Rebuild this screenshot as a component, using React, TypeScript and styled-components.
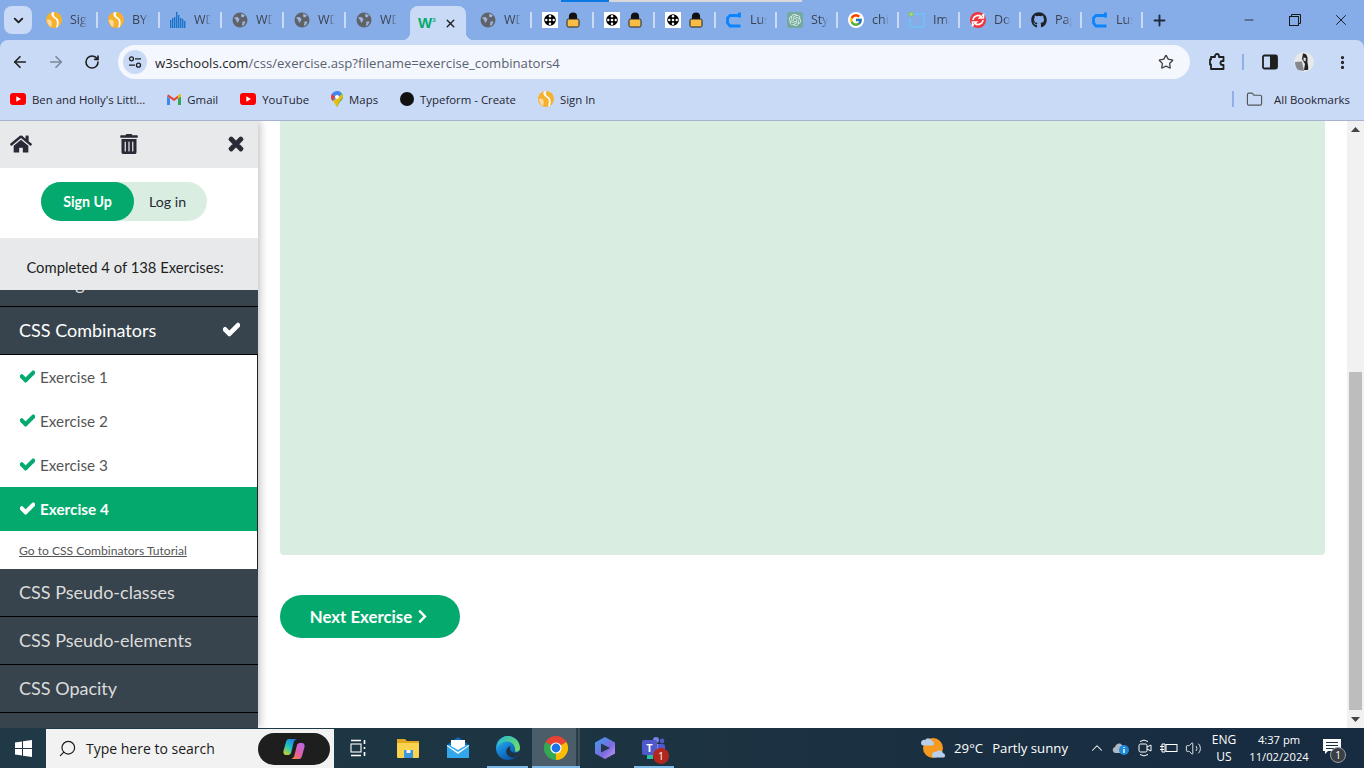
import React from "react";
import styled, { createGlobalStyle } from "styled-components";
import { ArrowLeft, ArrowRight, RotateCw, Star, MoreVertical, Folder, Plus, Minus, X, ChevronDown, ChevronUp, Search, Volume2 } from "lucide-react";
import { FaHome, FaTrashAlt, FaTimes, FaCheck, FaGithub, FaChevronRight } from "react-icons/fa";
import { FcGoogle } from "react-icons/fc";
import { SiOpenai } from "react-icons/si";

const Global = createGlobalStyle`
  html, body { margin: 0; padding: 0; overflow: hidden; background: #fff; }
  * { box-sizing: border-box; }
`;

const uiFont = `"Open Sans", "Noto Sans", sans-serif`;
const pageFont = `Lato, "Open Sans", sans-serif`;

const Screen = styled.div`
  width: 1364px; height: 768px; display: flex; flex-direction: column; overflow: hidden;
  position: relative; font-family: ${uiFont}; background: #87ade9;
`;
const LoadStrip = styled.div`
  position: absolute; top: 0; left: 561px; width: 241px; height: 2px; background: #d8d8d8;
  &::before { content: ""; display: block; width: 48px; height: 2px; background: #0b79e3; }
`;
const TabStrip = styled.div`
  height: 40px; flex: none; display: flex; align-items: center; padding-left: 4px; background: #87ade9;
`;
const TabMenu = styled.div`
  width: 28px; height: 28px; margin-right: 3px; border-radius: 8px; background: #c9daf6;
  display: flex; align-items: center; justify-content: center; color: #1f1f1f;
`;
const Tab = styled.div<{ $w?: number; $pad?: number; $noSep?: boolean }>`
  position: relative; height: 40px; flex: none; width: ${p => p.$w ?? 62}px;
  display: flex; align-items: center; gap: 8px; padding-left: ${p => p.$pad ?? 11}px; color: #3b4250;
  &::after {
    content: ""; display: ${p => (p.$noSep ? "none" : "block")}; position: absolute; right: -1px; top: 12px;
    width: 2px; height: 16px; background: #c9daf6;
  }
`;
const ActiveTab = styled.div`
  position: relative; height: 34px; margin-top: 6px; width: 56px; flex: none; background: #c9daf6;
  border-radius: 8px 8px 0 0; display: flex; align-items: center; padding: 0 9px 0 8px; justify-content: space-between;
  color: #1f1f1f;
  &::before, &::after { content: ""; position: absolute; bottom: 0; width: 8px; height: 8px; }
  &::before { left: -8px; background: radial-gradient(circle at 0 0, transparent 8px, #c9daf6 8.5px); }
  &::after { right: -8px; background: radial-gradient(circle at 100% 0, transparent 8px, #c9daf6 8.5px); }
`;
const TabTitle = styled.span`
  width: 17px; overflow: hidden; white-space: nowrap; font-size: 12.5px; line-height: 16px;
  -webkit-mask-image: linear-gradient(90deg, #000 60%, transparent);
  mask-image: linear-gradient(90deg, #000 60%, transparent);
`;
const W3Mark = styled.span`
  width: 17px; font-family: "Liberation Sans", sans-serif; font-weight: 700; font-size: 15px; line-height: 16px;
  color: #04aa6d; white-space: nowrap; letter-spacing: -1px;
  sup { font-size: 6px; color: #04aa6d; vertical-align: 6px; line-height: 0; margin-left: 1px; }
`;
const NewTab = styled.div`
  width: 34px; margin-left: 0; display: flex; justify-content: center; color: #1f2a3a;
`;
const WindowControls = styled.div`
  margin-left: auto; display: flex; height: 40px; color: #1a1a1a;
`;
const WinBtn = styled.div`
  width: 46px; display: flex; align-items: center; justify-content: center;
`;

const Toolbar = styled.div`
  height: 44px; flex: none; background: #c9daf6; border-radius: 8px 8px 0 0; display: flex; align-items: center;
  padding: 0 0 0 2px; color: #1f1f1f;
`;
const ToolBtn = styled.div<{ $w?: number; $dim?: boolean }>`
  width: ${p => p.$w ?? 36}px; flex: none; display: flex; justify-content: center; align-items: center;
  color: ${p => (p.$dim ? "#7c8798" : "#1f1f1f")};
`;
const Omnibox = styled.div`
  width: 1072px; margin-left: 8px; height: 34px; border-radius: 17px; background: #f4f7fd; flex: none;
  display: flex; align-items: center; padding: 0 16px 0 5px;
`;
const SiteChip = styled.div`
  width: 24px; height: 24px; border-radius: 50%; background: #c9daf6; display: flex; align-items: center; justify-content: center; flex: none;
`;
const Url = styled.div`
  margin-left: 8px; padding-top: 1px; font-size: 13.15px; color: #5a6270; white-space: nowrap; flex: 1;
  b { font-weight: 400; color: #1f1f1f; }
`;
const ToolRight = styled.div`
  display: flex; align-items: center; margin-left: 10px; flex: 1;
`;
const Divider = styled.div`
  width: 2px; height: 16px; background: #8fb1e8; flex: none;
`;
const Bookmarks = styled.div`
  height: 37px; flex: none; background: #c9daf6; border-bottom: 1px solid #a6b3cd; display: flex; align-items: center;
  padding: 0 14px 6px 10px; gap: 22px;
`;
const Bookmark = styled.div`
  display: flex; align-items: center; gap: 6px; font-size: 11.4px; color: #1f2633; white-space: nowrap;
`;
const BookmarkEnd = styled.div`
  margin-left: auto; display: flex; align-items: center; gap: 8px; font-size: 11.4px; color: #1f2633;
`;

const PageArea = styled.div`
  flex: 1; min-height: 0; display: flex; background: #fff; overflow: hidden;
`;
const Sidebar = styled.aside`
  width: 258px; flex: none; display: flex; flex-direction: column; position: relative; z-index: 2;
  box-shadow: 2px 0 8px rgba(0, 0, 0, 0.25); background: #fff; font-family: ${pageFont}; overflow: hidden;
`;
const SideIcons = styled.div`
  height: 47px; flex: none; background: #e7e9eb; display: flex; align-items: center; justify-content: space-between;
  padding: 0 12px 2px 10px; color: #282a35;
`;
const AuthBox = styled.div`
  height: 70px; flex: none; background: #fff; display: flex; align-items: center; padding: 0 0 4px 41px;
`;
const AuthPill = styled.div`
  width: 166px; height: 39px; border-radius: 20px; background: #d9eee1; display: flex; align-items: center;
  font-size: 14.2px; color: #282a35;
`;
const SignUp = styled.div`
  width: 93px; height: 39px; border-radius: 20px; background: #04aa6d; color: #fff; font-weight: 700;
  display: flex; align-items: center; justify-content: center;
`;
const LogIn = styled.div`
  flex: 1; text-align: center; padding-right: 6px;
`;
const Completed = styled.div`
  height: 52px; flex: none; background: #e7e9eb; display: flex; align-items: center; justify-content: center;
  font-size: 14.8px; color: #1f1f1f; padding: 5px 8px 0 0;
`;
const ClippedRow = styled.div`
  height: 17px; flex: none; overflow: hidden; display: flex; align-items: flex-end; padding: 0 0 11px 19px;
  background: #38444d; border-bottom: 1px solid #000; color: #ddd; font-size: 18px; line-height: 24px;
`;
const TopicRow = styled.div<{ $open?: boolean }>`
  height: 48px; flex: none; display: flex; align-items: center; justify-content: space-between; background: #38444d;
  padding: 0 18px 2px 19px; font-size: 18px; color: ${p => (p.$open ? "#fff" : "#dcdcdc")};
  border-bottom: 1px solid #000;
`;
const SideFill = styled.div`
  flex: 1; background: #38444d;
`;
const ExerciseList = styled.div`
  flex: none; background: #fff; border-right: 1px solid #222;
`;
const ExerciseRow = styled.div<{ $active?: boolean }>`
  height: 44px; display: flex; align-items: center; gap: 5px; padding: 0 0 1px 20px; font-size: 15.3px;
  background: ${p => (p.$active ? "#04aa6d" : "#fff")};
  color: ${p => (p.$active ? "#fff" : "#555")};
  font-weight: ${p => (p.$active ? 700 : 400)};
  svg { color: ${p => (p.$active ? "#fff" : "#04aa6d")}; stroke: currentColor; stroke-width: 40; }
`;
const TutorialLink = styled.div`
  height: 38px; display: flex; align-items: center; padding: 1px 0 0 19px; font-size: 12.1px; color: #555; text-decoration: underline;
`;
const Main = styled.main`
  flex: 1; min-width: 0; padding: 0 22px;
`;
const GreenPanel = styled.div`
  height: 434px; background: #d9eee1; border-radius: 0 0 4px 4px;
`;
const NextBtn = styled.div`
  margin-top: 40px; width: 180px; height: 43px; border-radius: 22px; background: #04aa6d; color: #fff;
  font-family: ${pageFont}; font-weight: 700; font-size: 16.8px; display: flex; align-items: center; justify-content: center; gap: 3px;
`;
const Scrollbar = styled.div`
  width: 17px; flex: none; background: #f1f1f1; display: flex; flex-direction: column; align-items: center;
`;
const ScrollArrow = styled.div`
  height: 17px; flex: none; display: flex; align-items: center; justify-content: center;
`;
const ScrollThumb = styled.div`
  width: 13px; height: 338px; margin-top: 234px; background: #bdbdbd; flex: none;
`;
const ScrollEnd = styled(ScrollArrow)`
  margin-top: auto;
`;

const Taskbar = styled.div`
  height: 40px; flex: none; background: linear-gradient(90deg, #1f3a46, #1c3342 50%, #172b41); display: flex; align-items: stretch; color: #fff; font-family: ${uiFont};
`;
const StartBtn = styled.div`
  width: 46px; flex: none; display: flex; align-items: center; justify-content: center;
`;
const SearchBox = styled.div`
  width: 288px; flex: none; margin-top: 1px; background: #f2f2f2; color: #1a1a1a; display: flex; align-items: center;
  padding: 0 4px 0 12px; font-size: 14px; gap: 9px;
`;
const SearchLabel = styled.span`
  flex: 1; white-space: nowrap;
`;
const CopilotPill = styled.div`
  width: 72px; height: 32px; border-radius: 16px; background: #1e1e1e; display: flex; align-items: center; justify-content: center;
`;
const TaskIcon = styled.div<{ $w?: number; $on?: boolean; $bar?: boolean }>`
  width: ${p => p.$w ?? 49}px; flex: none; position: relative; display: flex; align-items: center; justify-content: center;
  background: ${p => (p.$on ? "linear-gradient(90deg, #4a5d68 44px, #2a3c47 44px, #2a3c47 46px, #3a4d58 46px)" : "transparent")};
  &::after {
    content: ""; display: ${p => (p.$bar || p.$on ? "block" : "none")}; position: absolute; left: ${p => (p.$on ? 0 : 4)}px; right: ${p => (p.$on ? 0 : 4)}px; bottom: 0; height: 2px; background: #7db9e8;
  }
`;
const TaskApps = styled.div`
  display: flex; margin-left: 0;
`;
const Tray = styled.div`
  margin-left: auto; display: flex; align-items: center; font-size: 13px; padding-right: 15px;
`;
const Weather = styled.div`
  display: flex; align-items: center; gap: 8px; margin-right: 17px; white-space: nowrap; font-size: 13.2px;
  span + span { margin-left: 1px; }
`;
const TrayIcon = styled.div`
  width: 24px; display: flex; justify-content: center; align-items: center;
`;
const TwoLine = styled.div<{ $w: number; $size?: number }>`
  width: ${p => p.$w}px; text-align: center; font-size: ${p => p.$size ?? 12}px; line-height: 17px; white-space: nowrap;
`;
const NotifyBtn = styled.div`
  width: 34px; height: 40px; position: relative; display: flex; align-items: center; justify-content: center; padding-bottom: 4px;
`;
const NotifyBadge = styled.span`
  position: absolute; left: 15px; top: 19px; width: 16px; height: 16px; border-radius: 50%; background: #3a3f44; border: 1px solid #9aa0a6;
  font-size: 10px; line-height: 14px; text-align: center; color: #fff;
`;
const TeamsWrap = styled.div`
  position: relative; width: 24px; height: 24px;
`;
const TeamsBadge = styled.span`
  position: absolute; right: -3px; bottom: -4px; width: 16px; height: 16px; border-radius: 50%; background: #b3261e;
  font-size: 10.5px; line-height: 16px; text-align: center; color: #fff;
`;
const TeamsTile = styled.span`
  position: absolute; left: 0; top: 4px; width: 15px; height: 15px; border-radius: 2px; background: #5059c9; color: #fff;
  font-size: 11px; font-weight: 700; line-height: 15px; text-align: center;
`;
const GptTile = styled.span`
  width: 16px; height: 16px; border-radius: 3px; background: #74aa9c; color: #e4f1ee; display: flex; align-items: center; justify-content: center; flex: none;
`;
const GoogleChip = styled.span`
  width: 16px; height: 16px; border-radius: 50%; background: #fff; display: flex; align-items: center; justify-content: center; flex: none;
`;
const ThickCheck = styled(FaCheck)`
  stroke: currentColor; stroke-width: 40;
`;
const ThickTimes = styled(FaTimes)`
  stroke: currentColor; stroke-width: 30;
`;

const SignLogo = ({ s = 16 }: { s?: number }) => (
  <svg width={s} height={s} viewBox="0 0 16 16" style={{ flex: "none" }}>
    <circle cx="8" cy="8" r="8" fill="#f6b02c" />
    <path d="M6 0.300C4.500 3 6 5 8.500 6.500S11.500 10 10 15.700L12 14.800C13.500 10 12.500 7 10 5.500S7.500 3 8.500 0.300Z" fill="#fff" />
    <path d="M0.800 8C3 6.800 5 7.500 5.500 9.500S5.500 14 5 15C3 14 1.300 11 0.800 8Z" fill="#fff" opacity=".55" />
  </svg>
);
const BarsLogo = () => (
  <svg width="16" height="16" viewBox="0 0 16 16" style={{ flex: "none" }}>
    {[[0, 8], [2, 6], [4, 5], [6, 0], [8, 3], [10, 6], [12, 7], [14, 9]].map(([x, y]) => (
      <rect key={x} x={x} y={y} width="1.400" height={16 - y} fill="#1a73c9" />
    ))}
  </svg>
);
const Globe = () => (
  <svg width="16" height="16" viewBox="0 0 16 16" style={{ flex: "none" }}>
    <circle cx="8" cy="8" r="7.500" fill="#5f6368" />
    <path d="M2 5.500L5.500 5 7.500 7 6.500 9.500 5 11 4.500 8.500ZM9.500 1.500L13 3.500 11 5.500 9 4.500ZM10.500 9.500H13.500L12 13 10 14Z" fill="#9fb6dc" />
  </svg>
);
const Codepen = () => (
  <svg width="16" height="16" viewBox="0 0 16 16" style={{ flex: "none" }}>
    <rect width="16" height="16" fill="#fff" />
    <circle cx="8" cy="8" r="5.800" fill="#000" />
    <circle cx="8" cy="4.300" r="1.200" fill="#fff" />
    <circle cx="8" cy="11.700" r="1.200" fill="#fff" />
    <circle cx="4.300" cy="8" r="1.200" fill="#fff" />
    <circle cx="11.700" cy="8" r="1.200" fill="#fff" />
    <circle cx="8" cy="8" r="1.300" fill="#fff" />
  </svg>
);
const Lock = () => (
  <svg width="14" height="16" viewBox="0 0 14 16" style={{ flex: "none" }}>
    <path d="M3.500 7V4.500a3.500 3.500 0 0 1 7 0V7" fill="#111" stroke="#111" strokeWidth="1.200" />
    <rect x="1" y="7" width="12" height="8" rx="1.500" fill="#f7bd45" stroke="#222" strokeWidth="1" />
  </svg>
);
const LusionC = () => (
  <svg width="16" height="16" viewBox="0 0 16 16" style={{ flex: "none" }}>
    <path d="M14.500 3.500H4L1.500 6V11L4 14H14.500M13.500 0.500V5.500" fill="none" stroke="#0b84ff" strokeWidth="2.800" />
  </svg>
);
const ImgIcon = () => (
  <svg width="16" height="16" viewBox="0 0 16 16" style={{ flex: "none" }}>
    <path d="M5 2H15V15H1V6" fill="none" stroke="#6cc4f5" strokeWidth="1.400" />
    <rect x="0.500" y="0.500" width="3.500" height="3.500" fill="#a9dc76" stroke="#7bc043" strokeWidth=".6" />
  </svg>
);
const RedSync = () => (
  <svg width="16" height="16" viewBox="0 0 16 16" style={{ flex: "none" }}>
    <circle cx="8" cy="8" r="8" fill="#f1353a" />
    <path d="M3 8a5 5 0 0 1 8-3.500L9.500 6H13.500V2.500L12 3.600M13 8a5 5 0 0 1-8 3.500L6.500 10H2.500V13.500L4 12.400" fill="none" stroke="#fff" strokeWidth="1.600" />
  </svg>
);
const YouTube = () => (
  <svg width="16" height="12" viewBox="0 0 16 12" style={{ flex: "none" }}>
    <rect width="16" height="12" rx="3" fill="#f00" />
    <path d="M6.300 3.200L11 6 6.300 8.800Z" fill="#fff" />
  </svg>
);
const Gmail = () => (
  <svg width="14" height="11" viewBox="0 0 14 11" style={{ flex: "none" }}>
    <path d="M0 2V11H3V4.500Z" fill="#4285f4" />
    <path d="M11 4.500V11H14V2Z" fill="#34a853" />
    <path d="M0 2L7 7 14 2 12.600 0.400 7 4.400 1.400 0.400Z" fill="#ea4335" />
    <path d="M11 1.400L14 0V2.500L11 4.500Z" fill="#fbbc04" />
  </svg>
);
const MapsPin = () => (
  <svg width="12" height="16" viewBox="0 0 12 16" style={{ flex: "none" }}>
    <path d="M6 0A6 6 0 0 1 12 6C12 8 10 10 8.500 11.500L6 16 4 12Z" fill="#4caf50" />
    <path d="M6 0A6 6 0 0 1 11 3L2 10 1 9A6 6 0 0 1 0 6 6 6 0 0 1 6 0Z" fill="#4285f4" />
    <path d="M0.800 3L4 5.500 1.500 10A6 6 0 0 1 0 6 6 6 0 0 1 .8 3Z" fill="#ea4335" />
    <path d="M2 10L11 3 12 6 8 11 6 16Z" fill="#fbbc04" opacity=".9" />
    <circle cx="6" cy="6" r="2" fill="#fff" />
  </svg>
);
const Dot = () => (
  <svg width="14" height="14" viewBox="0 0 14 14" style={{ flex: "none" }}><circle cx="7" cy="7" r="7" fill="#111" /></svg>
);
const Tune = () => (
  <svg width="14" height="12" viewBox="0 0 14 12">
    <circle cx="3.500" cy="2.800" r="2" fill="none" stroke="#1f1f1f" strokeWidth="1.300" />
    <path d="M7 2.800H13M1 9.200H7" stroke="#1f1f1f" strokeWidth="1.300" />
    <circle cx="10.500" cy="9.200" r="2" fill="none" stroke="#1f1f1f" strokeWidth="1.300" />
  </svg>
);
const PuzzlePiece = () => (
  <svg width="18" height="18" viewBox="0 0 18 18">
    <path d="M3 4H7V3a2 2 0 0 1 4 0v1h4.500v4H14.500a2 2 0 0 0 0 4H15.500V16H3V11.500H2V6.500H3Z" fill="none" stroke="#1f1f1f" strokeWidth="1.800" strokeLinejoin="round" />
  </svg>
);
const SidePanel = () => (
  <svg width="16" height="16" viewBox="0 0 16 16">
    <rect x="1" y="1.500" width="14" height="13" rx="1.500" fill="none" stroke="#1f1f1f" strokeWidth="1.800" />
    <rect x="8" y="1.500" width="7" height="13" fill="#1f1f1f" />
  </svg>
);
const Avatar = () => (
  <svg width="20" height="20" viewBox="0 0 20 20">
    <circle cx="10" cy="10" r="10" fill="#e6e8ea" />
    <path d="M9 1.500C12 1 14 4 13.500 8S15 14 14 18H10L11 12 8 7Z" fill="#222" />
    <path d="M1 10L8 9.500 10 19 4 18C2 16 1 13 1 10Z" fill="#85888d" />
    <path d="M9.500 5.500L12 6 11.500 9.500 9.500 8.500Z" fill="#ddd" />
  </svg>
);
const Restore = () => (
  <svg width="12" height="12" viewBox="0 0 12 12">
    <rect x="0.500" y="2.500" width="9" height="9" fill="none" stroke="#1a1a1a" />
    <path d="M2.500 2.500V0.500H11.500V9.500H9.500" fill="none" stroke="#1a1a1a" />
  </svg>
);
const WinLogo = () => (
  <svg width="17" height="17" viewBox="0 0 17 17">
    <path d="M0 2.400L7 1.400V8H0ZM8 1.200L17 0V8H8ZM0 9H7V15.600L0 14.600ZM8 9H17V17L8 15.800Z" fill="#fff" />
  </svg>
);
const CopilotMark = () => (
  <svg width="22" height="22" viewBox="0 0 22 22">
    <defs>
      <linearGradient id="cpa" x1="0.700" y1="0" x2="0.100" y2="1"><stop offset="0" stopColor="#1f7fe0" /><stop offset=".5" stopColor="#22c6c0" /><stop offset="1" stopColor="#d8d320" /></linearGradient>
      <linearGradient id="cpb" x1="0.900" y1="0" x2="0.100" y2="1"><stop offset="0" stopColor="#b86ae8" /><stop offset=".6" stopColor="#e35fa0" /><stop offset="1" stopColor="#f58a2e" /></linearGradient>
    </defs>
    <path d="M6 1H14C12 1.500 11 3 10.500 5L8 15C7.500 16.500 6 17 4.500 17H3C1 17 0 15 .5 13L3 4C3.500 2 4.500 1 6 1Z" fill="url(#cpa)" />
    <path d="M16 21H8C10 20.500 11 19 11.500 17L14 7C14.500 5.500 16 5 17.500 5H19C21 5 22 7 21.500 9L19 18C18.500 20 17.500 21 16 21Z" fill="url(#cpb)" />
  </svg>
);
const TaskView = () => (
  <svg width="18" height="18" viewBox="0 0 18 18" fill="none" stroke="#fff" strokeWidth="1.100">
    <rect x="1" y="5" width="10" height="8" />
    <path d="M1 1.500H11M1 16.500H11M14.500 1V5M14.500 8V10M14.500 13V17" strokeWidth="1.600" />
  </svg>
);
const Explorer = () => (
  <svg width="24" height="22" viewBox="0 0 24 22">
    <path d="M1 2H9L11 4H23V7H1Z" fill="#e2a81f" />
    <rect x="1" y="6" width="22" height="15" rx="1" fill="#fbd34f" />
    <rect x="8" y="13" width="9" height="8" fill="#3a96dd" />
    <rect x="10.500" y="13" width="4" height="3" fill="#f5f5f5" />
  </svg>
);
const MailIcon = () => (
  <svg width="24" height="24" viewBox="0 0 24 24">
    <path d="M1 9L12 1 23 9V22H1Z" fill="#0a6cbd" />
    <rect x="1" y="9" width="22" height="13" fill="#33a7ea" />
    <path d="M5 4H19V10L12 14 5 10Z" fill="#fff" />
    <path d="M1 9L12 16 23 9 23 10 12 18 1 10Z" fill="#fff" />
  </svg>
);
const EdgeIcon = () => (
  <svg width="24" height="24" viewBox="0 0 24 24">
    <defs>
      <linearGradient id="eg" x1="0" y1="0" x2="0.700" y2="1"><stop offset="0" stopColor="#3cc6ee" /><stop offset=".5" stopColor="#1583d6" /><stop offset="1" stopColor="#0b4f9e" /></linearGradient>
      <linearGradient id="eg2" x1="0" y1="0" x2="1" y2="0.600"><stop offset="0" stopColor="#1fb6d4" /><stop offset="1" stopColor="#6fdc6a" /></linearGradient>
    </defs>
    <circle cx="12" cy="12" r="12" fill="url(#eg)" />
    <path d="M11 0C18 0 24 5 24 12.500 24 15 21.500 16 19 15.500 20 10 16 5.500 11 5.500 7 5.500 3 8 1 11.500 2 5 6 0 11 0Z" fill="url(#eg2)" />
    <path d="M24 13C24 16 21 17.500 17.500 16.500 14 15.500 13 13 15 10.500 12 10.500 9.500 13.500 10.500 17 11.500 20 15 22 18.500 21.500 22 19.500 24 16.500 24 13Z" fill="#1c3342" />
  </svg>
);
const ChromeIcon = () => (
  <svg width="24" height="24" viewBox="0 0 24 24">
    <path d="M12 12L1.600 6A12 12 0 0 1 22.400 6Z" fill="#ea4335" />
    <path d="M12 12L22.400 6A12 12 0 0 1 12 24Z" fill="#fbbc04" />
    <path d="M12 12L12 24A12 12 0 0 1 1.600 6Z" fill="#34a853" />
    <circle cx="12" cy="12" r="5.600" fill="#fff" />
    <circle cx="12" cy="12" r="4.400" fill="#1a73e8" />
  </svg>
);
const HexApp = () => (
  <svg width="24" height="24" viewBox="0 0 24 24">
    <defs><linearGradient id="hx" x1="0" y1="0" x2="1" y2="1"><stop offset="0" stopColor="#3aa1ea" /><stop offset=".6" stopColor="#7d6ae3" /><stop offset="1" stopColor="#c9a0ee" /></linearGradient></defs>
    <path d="M12 1L22 6.500V17.500L12 23 2 17.500V6.500Z" fill="url(#hx)" />
    <path d="M8 7.500L17 12 8 16.500Z" fill="#22384a" />
  </svg>
);
const TeamsBack = () => (
  <svg width="24" height="24" viewBox="0 0 24 24">
    <circle cx="14" cy="4" r="3" fill="#7b83eb" /><circle cx="20" cy="5" r="2.400" fill="#5059c9" />
    <rect x="9" y="8" width="10" height="11" rx="2" fill="#7b83eb" /><rect x="16" y="8" width="7" height="9" rx="2" fill="#5059c9" />
    <rect x="5" y="18" width="6" height="5" fill="#25c2a0" />
  </svg>
);
const WeatherIcon = () => (
  <svg width="26" height="26" viewBox="0 0 26 26">
    <circle cx="13" cy="13" r="10" fill="#f59a1f" />
    <path d="M1 8a3 3 0 0 1 4-3 4 4 0 0 1 7 1 2.500 2.500 0 0 1 1 4.500H3A2.500 2.500 0 0 1 1 8Z" fill="#b7cfea" />
    <path d="M12 20a3 3 0 0 1 4-3 4 4 0 0 1 7 1 2.500 2.500 0 0 1 1 4.500H14A2.500 2.500 0 0 1 12 20Z" fill="#b7cfea" />
  </svg>
);
const CloudInfo = () => (
  <svg width="18" height="16" viewBox="0 0 18 16">
    <path d="M1 11a3 3 0 0 1 2-4 4 4 0 0 1 7-2 3 3 0 0 1 3 3v5H3a2.500 2.500 0 0 1-2-2Z" fill="#aeb8c2" />
    <circle cx="12" cy="10" r="5" fill="#1e88d9" />
    <path d="M12 9V13M12 7V8" stroke="#fff" strokeWidth="1.400" />
  </svg>
);
const MeetCam = () => (
  <svg width="14" height="18" viewBox="0 0 14 18" fill="none" stroke="#fff" strokeWidth="1">
    <rect x="1" y="5" width="8" height="8" rx="1.500" />
    <path d="M9 8L13 6V12L9 10M2 2.500A7 7 0 0 1 10 2.500M2 15.500A7 7 0 0 0 10 15.500" />
  </svg>
);
const PlugBattery = () => (
  <svg width="18" height="12" viewBox="0 0 18 12" fill="none" stroke="#fff" strokeWidth="1">
    <rect x="6" y="2.500" width="11" height="7" />
    <path d="M0 4.500H4M0 7.500H4M2 2H5V10H2Z" />
  </svg>
);
const Bubble = () => (
  <svg width="18" height="15" viewBox="0 0 18 15">
    <path d="M0 0H18V12H5L2 15V12H0Z" fill="#fff" />
    <path d="M3 3.500H15M3 6.500H15M3 9.500H11" stroke="#1c3342" strokeWidth="1" />
  </svg>
);

const App = () => (
  <Screen>
    <Global />
    <LoadStrip />
    <TabStrip>
      <TabMenu><ChevronDown size={15} strokeWidth={3} /></TabMenu>
      <Tab><SignLogo /><TabTitle>Sign</TabTitle></Tab>
      <Tab><SignLogo /><TabTitle>BYU</TabTitle></Tab>
      <Tab><BarsLogo /><TabTitle>WD</TabTitle></Tab>
      <Tab><Globe /><TabTitle>WD</TabTitle></Tab>
      <Tab><Globe /><TabTitle>WD</TabTitle></Tab>
      <Tab $w={65} $noSep><Globe /><TabTitle>WD</TabTitle></Tab>
      <ActiveTab><W3Mark>W<sup>3</sup></W3Mark><X size={13} strokeWidth={2.6} /></ActiveTab>
      <Tab $w={65} $pad={14}><Globe /><TabTitle>WD</TabTitle></Tab>
      <Tab $w={62}><Codepen /><Lock /></Tab>
      <Tab $w={61}><Codepen /><Lock /></Tab>
      <Tab $w={61}><Codepen /><Lock /></Tab>
      <Tab $w={61}><LusionC /><TabTitle>Lusion</TabTitle></Tab>
      <Tab $w={61}><GptTile><SiOpenai size={12} /></GptTile><TabTitle>Style</TabTitle></Tab>
      <Tab $w={61}><GoogleChip><FcGoogle size={14} /></GoogleChip><TabTitle>chi</TabTitle></Tab>
      <Tab $w={61}><ImgIcon /><TabTitle>Image</TabTitle></Tab>
      <Tab $w={61}><RedSync /><TabTitle>Doc</TabTitle></Tab>
      <Tab $w={61}><FaGithub size={16} color="#1f2328" style={{ flex: "none" }} /><TabTitle>Page</TabTitle></Tab>
      <Tab $w={61}><LusionC /><TabTitle>Lusion</TabTitle></Tab>
      <NewTab><Plus size={17} strokeWidth={2.6} /></NewTab>
      <WindowControls>
        <WinBtn><Minus size={14} strokeWidth={1.4} /></WinBtn>
        <WinBtn><Restore /></WinBtn>
        <WinBtn><X size={18} strokeWidth={1.3} /></WinBtn>
      </WindowControls>
    </TabStrip>
    <Toolbar>
      <ToolBtn><ArrowLeft size={18} strokeWidth={2.2} /></ToolBtn>
      <ToolBtn $dim><ArrowRight size={18} strokeWidth={2.2} /></ToolBtn>
      <ToolBtn><RotateCw size={16} strokeWidth={2.4} /></ToolBtn>
      <Omnibox>
        <SiteChip><Tune /></SiteChip>
        <Url><b>w3schools.com</b>/css/exercise.asp?filename=exercise_combinators4</Url>
        <Star size={16} strokeWidth={2} color="#444" />
      </Omnibox>
      <ToolRight>
        <ToolBtn $w={34}><PuzzlePiece /></ToolBtn>
        <ToolBtn $w={18}><Divider /></ToolBtn>
        <ToolBtn $w={36}><SidePanel /></ToolBtn>
        <ToolBtn $w={32}><Avatar /></ToolBtn>
        <ToolBtn $w={44}><MoreVertical size={17} strokeWidth={2.6} /></ToolBtn>
      </ToolRight>
    </Toolbar>
    <Bookmarks>
      <Bookmark><YouTube />Ben and Holly's Littl...</Bookmark>
      <Bookmark><Gmail />Gmail</Bookmark>
      <Bookmark><YouTube />YouTube</Bookmark>
      <Bookmark><MapsPin />Maps</Bookmark>
      <Bookmark><Dot />Typeform - Create</Bookmark>
      <Bookmark><SignLogo />Sign In</Bookmark>
      <BookmarkEnd>
        <Divider />
        <ToolBtn $w={24}><Folder size={17} strokeWidth={1.6} color="#555" /></ToolBtn>
        All Bookmarks
      </BookmarkEnd>
    </Bookmarks>
    <PageArea>
      <Sidebar>
        <SideIcons>
          <FaHome size={22} />
          <FaTrashAlt size={20} />
          <ThickTimes size={20} />
        </SideIcons>
        <AuthBox>
          <AuthPill>
            <SignUp>Sign Up</SignUp>
            <LogIn>Log in</LogIn>
          </AuthPill>
        </AuthBox>
        <Completed>Completed 4 of 138 Exercises:</Completed>
        <ClippedRow>CSS Align</ClippedRow>
        <TopicRow $open>CSS Combinators<ThickCheck size={17} color="#fff" /></TopicRow>
        <ExerciseList>
          <ExerciseRow><FaCheck size={15} />Exercise 1</ExerciseRow>
          <ExerciseRow><FaCheck size={15} />Exercise 2</ExerciseRow>
          <ExerciseRow><FaCheck size={15} />Exercise 3</ExerciseRow>
          <ExerciseRow $active><FaCheck size={15} />Exercise 4</ExerciseRow>
          <TutorialLink>Go to CSS Combinators Tutorial</TutorialLink>
        </ExerciseList>
        <TopicRow>CSS Pseudo-classes</TopicRow>
        <TopicRow>CSS Pseudo-elements</TopicRow>
        <TopicRow>CSS Opacity</TopicRow>
        <SideFill />
      </Sidebar>
      <Main>
        <GreenPanel />
        <NextBtn>Next Exercise <FaChevronRight size={15} /></NextBtn>
      </Main>
      <Scrollbar>
        <ScrollArrow><svg width="9" height="5" viewBox="0 0 9 5"><path d="M0 5L4.500 0 9 5Z" fill="#444" /></svg></ScrollArrow>
        <ScrollThumb />
        <ScrollEnd><svg width="9" height="5" viewBox="0 0 9 5"><path d="M0 0L4.500 5 9 0Z" fill="#444" /></svg></ScrollEnd>
      </Scrollbar>
    </PageArea>
    <Taskbar>
      <StartBtn><WinLogo /></StartBtn>
      <SearchBox>
        <Search size={19} strokeWidth={1.5} style={{ transform: "scaleX(-1)" }} />
        <SearchLabel>Type here to search</SearchLabel>
        <CopilotPill><CopilotMark /></CopilotPill>
      </SearchBox>
      <TaskApps>
        <TaskIcon $w={49}><TaskView /></TaskIcon>
        <TaskIcon $w={50}><Explorer /></TaskIcon>
        <TaskIcon $w={50}><MailIcon /></TaskIcon>
        <TaskIcon $w={49} $bar><EdgeIcon /></TaskIcon>
        <TaskIcon $w={48} $on><ChromeIcon /></TaskIcon>
        <TaskIcon $w={50}><HexApp /></TaskIcon>
        <TaskIcon $w={48} $bar>
          <TeamsWrap><TeamsBack /><TeamsTile>T</TeamsTile><TeamsBadge>1</TeamsBadge></TeamsWrap>
        </TaskIcon>
      </TaskApps>
      <Tray>
        <Weather><WeatherIcon /><span>29°C</span><span>Partly sunny</span></Weather>
        <TrayIcon><ChevronUp size={18} strokeWidth={1.4} /></TrayIcon>
        <TrayIcon><CloudInfo /></TrayIcon>
        <TrayIcon><MeetCam /></TrayIcon>
        <TrayIcon><PlugBattery /></TrayIcon>
        <TrayIcon><Volume2 size={17} strokeWidth={1.2} /></TrayIcon>
        <TwoLine $w={38}>ENG<br />US</TwoLine>
        <TwoLine $w={72} $size={11.2}>4:37 pm<br />11/02/2024</TwoLine>
        <NotifyBtn><Bubble /><NotifyBadge>1</NotifyBadge></NotifyBtn>
      </Tray>
    </Taskbar>
  </Screen>
);

export default App;
